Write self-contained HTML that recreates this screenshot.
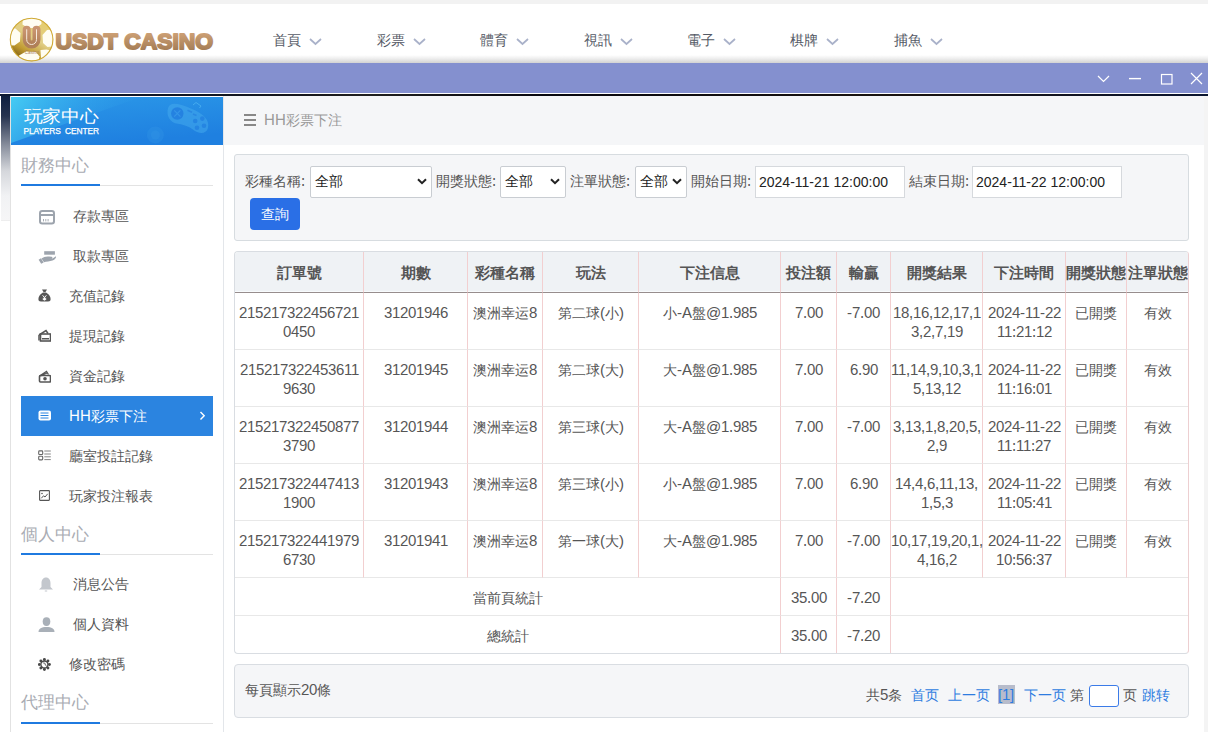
<!DOCTYPE html>
<html><head><meta charset="utf-8">
<style>
@font-face{font-family:"LSA";src:local("Liberation Sans");size-adjust:103.6%}
*{box-sizing:border-box;margin:0;padding:0}
html,body{width:1208px;height:732px;overflow:hidden;background:#fff;font-family:"LSA","Liberation Sans",sans-serif;color:#333}
.abs{position:absolute}
#topstrip{left:0;top:0;width:1208px;height:4px;background:#f2f2f2}
#header{left:0;top:4px;width:1208px;height:59px;background:#fff}
.nav{position:absolute;top:32px;font-size:14px;color:#555a66;white-space:nowrap}
.nav .chev{position:absolute;left:36px;top:5.5px}
#shadow{left:0;top:55px;width:1208px;height:8px;background:linear-gradient(#fff,#f0f0f0 40%,#d2d2d2)}
#band{left:0;top:63px;width:1208px;height:30px;background:#8490cf}
#wline{left:0;top:93px;width:1208px;height:1px;background:#fff}
#dline{left:0;top:94px;width:1208px;height:2px;background:linear-gradient(90deg,#0d1a33,#15161c 25%,#202020 30%,#08080f 45%,#1a1410 75%,#0a1530)}
#leftgrad{left:1px;top:96px;width:9px;height:125px;background:linear-gradient(#0e1f3f,#26334f 16%,#8a909e 40%,#d5d7dc 60%,#f1f2f4 80%,#f6f6f7 99%,#e8e8e8 100%)}
#sidebar{left:10px;top:96px;width:213px;height:640px;background:#fff;border-left:1px solid #e2e2e2}
#sbhead{left:11px;top:97px;width:212px;height:48px;background:#2489e2}
.sect{position:absolute;left:21px;font-size:17px;color:#a9acb3}
.sectline{position:absolute;left:21px;width:192px;height:1px;background:#e3e3e3}
.sectline b{position:absolute;left:0;top:-1px;width:79px;height:2px;background:#1f7ae0}
.item{position:absolute;left:21px;width:192px;height:40px;font-size:14px;color:#555}
.item span{position:absolute;top:12px}
.item.active{background:#2b84e0;color:#fff}
#main{left:223px;top:96px;width:985px;height:640px;background:#fff;border-left:1px solid #e3e6ea}
#crumb{left:224px;top:96px;width:980px;height:49px;background:#f5f6f8}
#rstrip{left:1204px;top:96px;width:4px;height:640px;background:#f4f4f4}
#filter{left:234px;top:154px;width:955px;height:87px;background:#f5f6f8;border:1px solid #d7dce0;border-radius:3px}
.lbl{position:absolute;top:173px;font-size:14px;color:#555}
.sel{position:absolute;top:166px;height:32px;background:#fff;border:1px solid #c9cdd2;border-radius:2px;font-size:14px;color:#222}
.sel span{position:absolute;left:4px;top:6px}
.sel svg{position:absolute;top:11px}
.inp{position:absolute;top:166px;height:32px;background:#fff;border:1px solid #d6d9dd;font-size:14px;color:#222;font-family:"Liberation Sans",sans-serif}
.inp span{position:absolute;left:3px;top:7px}
#btn{left:250px;top:198px;width:50px;height:32px;background:#2a6fe6;border-radius:4px;color:#fff;font-size:14px;text-align:center;line-height:32px}
table{position:absolute;left:234px;top:251px;border-collapse:separate;border-spacing:0;table-layout:fixed;font-size:14px;color:#555}

#tbl{left:234px;top:251px;width:955px;height:403px;border:1px solid #d9dde2;border-right-color:#edcfd1;border-radius:4px;overflow:hidden;background:#fff}
#tbl table{position:static;border-collapse:separate;border-spacing:0;table-layout:fixed;width:953px;font-size:14px;color:#555}
#tbl th,#tbl td{border-right:1px solid #f2cfd0;border-bottom:1px solid #e8e8e8;text-align:center;padding:0;white-space:nowrap}
#tbl th:last-child,#tbl td:last-child{border-right:none}
#tbl tr.hd th{height:41px;padding-top:3px;background:#eff2f5;border-bottom:1px solid #978d8d;box-shadow:inset 0 -1px #f8fbfd;font-size:15px;font-weight:bold;color:#555}
#tbl tr.bd td{height:57px;vertical-align:top;padding-top:11px;line-height:18.5px}
#tbl tr.sm td{height:38px;line-height:18px;padding-top:2px}
#tbl tr.sm2 td{height:37px;border-bottom:none}
#pager{left:234px;top:664px;width:955px;height:54px;background:#f5f6f8;border:1px solid #d9dde2;border-radius:4px}
.pg{top:687px;font-size:14px}
.blue{color:#2d7ce0}
</style></head><body>
<div id="topstrip" class="abs"></div>
<div id="header" class="abs"></div>
<div id="shadow" class="abs"></div>
<svg class="abs" style="left:0;top:0" width="230" height="63" viewBox="0 0 230 63">
  <defs>
   <linearGradient id="gold" x1=".8" y1="0" x2=".2" y2="1"><stop offset="0" stop-color="#e6cc68"/><stop offset=".45" stop-color="#e2cf86"/><stop offset=".75" stop-color="#c09a30"/><stop offset="1" stop-color="#6e5010"/></linearGradient>
   <linearGradient id="bronze" x1="0" y1="0" x2="0" y2="1"><stop offset="0" stop-color="#d6a87c"/><stop offset="1" stop-color="#9c7650"/></linearGradient>
   <linearGradient id="ubr" x1="0" y1="0" x2="0" y2="1"><stop offset="0" stop-color="#c99470"/><stop offset="1" stop-color="#b08058"/></linearGradient>
   <clipPath id="ball"><circle cx="31.6" cy="39.6" r="21.6"/></clipPath>
  </defs>
  <circle cx="31.6" cy="39.6" r="21.6" fill="url(#gold)"/>
  <g clip-path="url(#ball)" fill="#fffdf2">
   <path d="M23 16 L41 16 L41.5 24 L36 28 L28 28 L22.5 24.5Z"/>
   <path d="M7 28 L15.5 28.5 L20.5 33 L20 41.5 L14.5 45.5 L7 45Z"/>
   <path d="M56 29 L47 30 L42.5 35 L43 43 L47.5 47 L56 46Z"/>
   <path d="M19 55.5 L26 51.5 L36 52 L39.5 56.5 L38 64 L18 64Z"/>
   <path d="M40.5 50 L46.5 49.5 L52 51 L46.5 59.5 L41 58Z"/>
  </g>
  <circle cx="31.6" cy="39.6" r="21.3" fill="none" stroke="#cfa935" stroke-width="1.1"/>
  <path d="M26.7 29.7 V39.6 A4.9 4.9 0 0 0 36.5 39.6 V29.7" fill="none" stroke="url(#ubr)" stroke-width="8" stroke-linecap="round"/>
  <path d="M26.7 29.7 V39.6 A4.9 4.9 0 0 0 36.5 39.6 V29.7" fill="none" stroke="#f6eadc" stroke-width="1" stroke-linecap="round"/>
  <text x="31.8" y="53.6" font-family="Liberation Sans" font-size="4.6" fill="#a88060" text-anchor="middle" font-style="italic">Casino</text>
  <text x="55.6" y="48.9" font-family="Liberation Sans" font-weight="bold" font-size="22.2" fill="url(#bronze)" stroke="url(#bronze)" stroke-width="1.9" stroke-linejoin="round" textLength="157.5" lengthAdjust="spacingAndGlyphs">USDT CASINO</text>
</svg>
<div class="nav" style="left:273px">首頁<svg class="chev" width="13" height="8" viewBox="0 0 13 8"><path d="M1 1 L6.5 6 L12 1" stroke="#a9b1c9" stroke-width="1.7" fill="none"/></svg></div>
<div class="nav" style="left:377px">彩票<svg class="chev" width="13" height="8" viewBox="0 0 13 8"><path d="M1 1 L6.5 6 L12 1" stroke="#a9b1c9" stroke-width="1.7" fill="none"/></svg></div>
<div class="nav" style="left:480px">體育<svg class="chev" width="13" height="8" viewBox="0 0 13 8"><path d="M1 1 L6.5 6 L12 1" stroke="#a9b1c9" stroke-width="1.7" fill="none"/></svg></div>
<div class="nav" style="left:584px">視訊<svg class="chev" width="13" height="8" viewBox="0 0 13 8"><path d="M1 1 L6.5 6 L12 1" stroke="#a9b1c9" stroke-width="1.7" fill="none"/></svg></div>
<div class="nav" style="left:687px">電子<svg class="chev" width="13" height="8" viewBox="0 0 13 8"><path d="M1 1 L6.5 6 L12 1" stroke="#a9b1c9" stroke-width="1.7" fill="none"/></svg></div>
<div class="nav" style="left:790px">棋牌<svg class="chev" width="13" height="8" viewBox="0 0 13 8"><path d="M1 1 L6.5 6 L12 1" stroke="#a9b1c9" stroke-width="1.7" fill="none"/></svg></div>
<div class="nav" style="left:894px">捕魚<svg class="chev" width="13" height="8" viewBox="0 0 13 8"><path d="M1 1 L6.5 6 L12 1" stroke="#a9b1c9" stroke-width="1.7" fill="none"/></svg></div>

<div id="band" class="abs"></div>
<svg class="abs" style="left:1090px;top:65px" width="118" height="27" viewBox="0 0 118 27"><g stroke="#fff" fill="none" stroke-width="1.2"><path d="M8 11 L13.5 16.5 L19 11"/><path d="M39 13.6 H51" stroke-width="1.4"/><rect x="71.5" y="9.5" width="10.5" height="9.5"/><path d="M101 8 L112 19 M112 8 L101 19"/></g></svg>
<div id="wline" class="abs"></div>
<div id="dline" class="abs"></div>
<div id="leftgrad" class="abs"></div>
<div id="sidebar" class="abs"></div>
<div id="sbhead" class="abs"></div>
<div id="main" class="abs"></div>
<div id="crumb" class="abs"></div>
<div id="rstrip" class="abs"></div>
<div id="filter" class="abs"></div>

<svg class="abs" style="left:11px;top:97px" width="212" height="48" viewBox="0 0 212 48">
 <defs><linearGradient id="sbg" x1="0" y1="0" x2="0.35" y2="1"><stop offset="0" stop-color="#2b98e8"/><stop offset="1" stop-color="#1f80e0"/></linearGradient>
 <linearGradient id="sbl" x1="0" y1="0" x2="1" y2="0.3"><stop offset="0" stop-color="#45ccf3"/><stop offset="0.6" stop-color="#34a8ec" stop-opacity=".45"/><stop offset="1" stop-color="#2d9ae8" stop-opacity="0"/></linearGradient></defs>
 <rect width="212" height="48" fill="url(#sbg)"/>
 <path d="M0 0 H130 L0 46Z" fill="url(#sbl)"/>
 <g transform="translate(177,21) rotate(17)"><path d="M-22 -4 C-22 -11 -12 -11 0 -10 C12 -9 22 -5 22 4 C22 11 14 12 8 9.5 C3 7.5 -3 8 -8 8.5 C-16 10 -22 4 -22 -4Z" fill="#46acee" opacity=".5"/></g>
 <circle cx="166.3" cy="16.5" r="6.2" fill="#2280e0" opacity=".9"/>
 <path d="M163.2 13.4 L169.4 19.6 M169.4 13.4 L163.2 19.6" stroke="#3595e8" stroke-width="1.2"/>
 <path d="M176.5 13.2 l4.5 2 M182 17 l3.5 1.6" stroke="#2a88e2" stroke-width="1.6"/>
 <g fill="#2585e2"><circle cx="191.3" cy="21.6" r="2.3"/><circle cx="184.2" cy="24" r="2.3"/><circle cx="193" cy="28.8" r="2.3"/><circle cx="186" cy="30.8" r="2.3"/></g>
 <path d="M182 8 l3 -2.5 l5 3.5 l-1.5 2" stroke="#4cb2f0" stroke-width="1" fill="none" opacity=".8"/>
 <circle cx="144.4" cy="38" r="8.5" fill="#3aa0ea" opacity=".22"/><circle cx="144.4" cy="38" r="4.5" fill="#3aa0ea" opacity=".2"/>
 <text transform="translate(12.5 24.6) scale(1 0.9)" font-size="19" fill="#fff">玩家中心</text>
 <text x="12.5" y="37" font-size="8.4" fill="#fff" stroke="#fff" stroke-width=".25" font-family="Liberation Sans" textLength="75.5" lengthAdjust="spacing" style="white-space:pre">PLAYERS  CENTER</text>
</svg>
<div class="sect" style="top:154px">財務中心</div>
<div class="sectline" style="top:185px"><b></b></div>
<div class="item" style="top:196px"><svg class="abs" style="left:17px;top:13px" width="18" height="16" viewBox="0 0 18 16"><rect x="2" y="2" width="14" height="12.5" rx="2.2" fill="none" stroke="#9da4ad" stroke-width="2"/><rect x="2" y="5" width="14" height="2" fill="#9da4ad"/><path d="M5.5 10v2.4M7.8 10v2.4M10.1 10v2.4" stroke="#9da4ad" stroke-width=".9"/></svg><span style="left:52px">存款專區</span></div>
<div class="item" style="top:236px"><svg class="abs" style="left:17px;top:15px" width="19" height="13" viewBox="0 0 19 13"><rect x="6.2" y="0.2" width="10.7" height="3.5" fill="#9da4ad"/><path d="M3.5 7.5 C5.5 6 8 5.2 11 5.5 L13.5 5.7 C14.8 5.8 14.8 7.3 13.5 7.4 L9.5 7.8 L14.5 7.6 L18 5.2 C18.6 6.2 17 8.5 14.5 9.6 C12 10.6 8 10.8 6 11.2Z" fill="#9da4ad"/><path d="M0.6 8.8 L3 7.2 L5.6 11.4 L3.2 12.8Z" fill="#9da4ad"/></svg><span style="left:52px">取款專區</span></div>
<div class="item" style="top:276px"><svg class="abs" style="left:17px;top:13px" width="13" height="13" viewBox="0 0 13 13"><path d="M4 0.5h5l-1.5 2.5h-2z" fill="#555"/><path d="M5 3.5h3C11 5 13 8 12.5 11 12 12.5 11 12.5 6.5 12.5 2 12.5 1 12.5 0.5 11 0 8 2 5 5 3.5z" fill="#555"/><path d="M4.6 6.3l1.9 2.2 1.9-2.2M6.5 8.5v3M4.8 9.3h3.4M4.8 10.6h3.4" stroke="#fff" stroke-width="1" fill="none"/></svg><span style="left:48px">充值記錄</span></div>
<div class="item" style="top:316px"><svg class="abs" style="left:17px;top:13px" width="13" height="13" viewBox="0 0 13 13"><path d="M1 6 L8 1.5 L10 4.5" stroke="#555" stroke-width="1.5" fill="none"/><rect x="2.5" y="5" width="10" height="7" fill="none" stroke="#555" stroke-width="1.6"/><path d="M1 6v5.5" stroke="#555" stroke-width="1.5"/><rect x="4" y="9" width="7" height="1.5" fill="#555"/></svg><span style="left:48px">提現記錄</span></div>
<div class="item" style="top:356px"><svg class="abs" style="left:17px;top:14px" width="13" height="13" viewBox="0 0 13 13"><path d="M1.5 6 L8.5 1.5 L10.5 4.5 M2.5 6 L9 3" stroke="#555" stroke-width="1.3" fill="none"/><rect x="1.5" y="5.5" width="11" height="6.5" rx="1" fill="none" stroke="#555" stroke-width="1.6"/><circle cx="7" cy="8.7" r="1.8" fill="#555"/></svg><span style="left:48px">資金記錄</span></div>
<div class="item active" style="top:396px"><svg class="abs" style="left:17px;top:14px" width="13" height="11" viewBox="0 0 13 11"><rect x="0.5" y="0.5" width="12.5" height="10" rx="2" fill="#fff"/><path d="M2.5 3h8M2.5 5.5h8M2.5 8h8" stroke="#2b84e0" stroke-width="1"/></svg><span style="left:48px">HH彩票下注</span><svg class="abs" style="left:178px;top:15px" width="7" height="10" viewBox="0 0 7 10"><path d="M1.5 1 L5.2 4.8 L1.5 8.6" stroke="#fff" stroke-width="1.4" fill="none"/></svg></div>
<div class="item" style="top:436px"><svg class="abs" style="left:17px;top:14px" width="13" height="11" viewBox="0 0 13 11"><rect x="0.7" y="0.9" width="4" height="3.6" rx=".8" fill="none" stroke="#666" stroke-width="1.1"/><rect x="0.7" y="6.3" width="4" height="3.6" rx=".8" fill="none" stroke="#666" stroke-width="1.1"/><path d="M6.3 1h6.5M6.3 4h6.5M6.3 6.8h6.5M6.3 9.6h6.5" stroke="#777" stroke-width=".9"/></svg><span style="left:48px">廳室投註記錄</span></div>
<div class="item" style="top:476px"><svg class="abs" style="left:18px;top:14px" width="11" height="11" viewBox="0 0 11 11"><rect x="0.6" y="0.6" width="9.8" height="9.8" rx=".6" fill="none" stroke="#555" stroke-width="1.1"/><path d="M2.3 8.3 L4.5 5.8 L6 7 L8.7 3.8" stroke="#555" stroke-width="1" fill="none"/><circle cx="3" cy="3.5" r=".8" fill="#555"/></svg><span style="left:48px">玩家投注報表</span></div>
<div class="sect" style="top:523px">個人中心</div>
<div class="sectline" style="top:554px"><b></b></div>
<div class="item" style="top:564px"><svg class="abs" style="left:17px;top:13px" width="16" height="15" viewBox="0 0 16 15"><path d="M8 0.5C5 0.5 3.5 3 3.5 6 L3.5 10 L1 12.5 L15 12.5 L12.5 10 L12.5 6 C12.5 3 11 0.5 8 0.5Z" fill="#c3c7cd"/><path d="M6.8 14h2.4" stroke="#c3c7cd" stroke-width="1"/></svg><span style="left:52px">消息公告</span></div>
<div class="item" style="top:604px"><svg class="abs" style="left:17px;top:13px" width="17" height="15" viewBox="0 0 17 15"><ellipse cx="8.5" cy="4.6" rx="3.8" ry="4.4" fill="#a9b0b8"/><path d="M0.5 15 C0.5 11.5 3.5 10 8.5 10 C13.5 10 16.5 11.5 16.5 15Z" fill="#a9b0b8"/></svg><span style="left:52px">個人資料</span></div>
<div class="item" style="top:644px"><svg class="abs" style="left:17px;top:14px" width="13" height="13" viewBox="0 0 13 13"><g fill="#4a4a4a"><circle cx="11.40" cy="6.50" r="1.45"/><circle cx="9.94" cy="10.04" r="1.45"/><circle cx="6.40" cy="11.50" r="1.45"/><circle cx="2.86" cy="10.04" r="1.45"/><circle cx="1.40" cy="6.50" r="1.45"/><circle cx="2.86" cy="2.96" r="1.45"/><circle cx="6.40" cy="1.50" r="1.45"/><circle cx="9.94" cy="2.96" r="1.45"/></g><circle cx="6.4" cy="6.5" r="3.5" fill="none" stroke="#4a4a4a" stroke-width="1.3"/><path d="M5.2 5 C6.5 4.6 7.6 5.6 7.2 6.8 L8.8 8.4" stroke="#555" stroke-width="1" fill="none"/></svg><span style="left:48px">修改密碼</span></div>
<div class="sect" style="top:691px">代理中心</div>
<div class="sectline" style="top:723px"><b></b></div>

<div class="abs" style="left:244px;top:114px;width:12px;height:2px;background:#888"></div>
<div class="abs" style="left:244px;top:119px;width:12px;height:2px;background:#888"></div>
<div class="abs" style="left:244px;top:124px;width:12px;height:2px;background:#888"></div>
<div class="abs" style="left:264px;top:112px;font-size:14px;color:#999">HH彩票下注</div>
<div class="lbl" style="left:245px">彩種名稱:</div>
<div class="sel" style="left:310px;width:122px"><span>全部</span><svg style="left:106px" width="10" height="7" viewBox="0 0 10 7"><path d="M1 1.2 L5 5.2 L9 1.2" stroke="#222" stroke-width="2" fill="none"/></svg></div>
<div class="lbl" style="left:436px">開獎狀態:</div>
<div class="sel" style="left:500px;width:66px"><span>全部</span><svg style="left:49px" width="10" height="7" viewBox="0 0 10 7"><path d="M1 1.2 L5 5.2 L9 1.2" stroke="#222" stroke-width="2" fill="none"/></svg></div>
<div class="lbl" style="left:570px">注單狀態:</div>
<div class="sel" style="left:635px;width:52px"><span>全部</span><svg style="left:36px" width="10" height="7" viewBox="0 0 10 7"><path d="M1 1.2 L5 5.2 L9 1.2" stroke="#222" stroke-width="2" fill="none"/></svg></div>
<div class="lbl" style="left:691px">開始日期:</div>
<div class="inp" style="left:755px;width:150px"><span>2024-11-21 12:00:00</span></div>
<div class="lbl" style="left:909px">結束日期:</div>
<div class="inp" style="left:972px;width:150px"><span>2024-11-22 12:00:00</span></div>
<div id="btn" class="abs">查詢</div>
<div id="tbl" class="abs"><table><colgroup><col style="width:129px"><col style="width:104px"><col style="width:75px"><col style="width:96px"><col style="width:142px"><col style="width:56px"><col style="width:54px"><col style="width:92px"><col style="width:83px"><col style="width:61px"><col style="width:61px"></colgroup><tr class="hd"><th>訂單號</th><th>期數</th><th>彩種名稱</th><th>玩法</th><th>下注信息</th><th>投注額</th><th>輸贏</th><th>開獎結果</th><th>下注時間</th><th>開獎狀態</th><th>注單狀態</th></tr><tr class="bd"><td>215217322456721<br>0450</td><td>31201946</td><td>澳洲幸运8</td><td>第二球(小)</td><td>小-A盤@1.985</td><td>7.00</td><td>-7.00</td><td>18,16,12,17,1<br>3,2,7,19</td><td>2024-11-22<br>11:21:12</td><td>已開獎</td><td>有效</td></tr><tr class="bd"><td>215217322453611<br>9630</td><td>31201945</td><td>澳洲幸运8</td><td>第二球(大)</td><td>大-A盤@1.985</td><td>7.00</td><td>6.90</td><td>11,14,9,10,3,1<br>5,13,12</td><td>2024-11-22<br>11:16:01</td><td>已開獎</td><td>有效</td></tr><tr class="bd"><td>215217322450877<br>3790</td><td>31201944</td><td>澳洲幸运8</td><td>第三球(大)</td><td>大-A盤@1.985</td><td>7.00</td><td>-7.00</td><td>3,13,1,8,20,5,<br>2,9</td><td>2024-11-22<br>11:11:27</td><td>已開獎</td><td>有效</td></tr><tr class="bd"><td>215217322447413<br>1900</td><td>31201943</td><td>澳洲幸运8</td><td>第三球(小)</td><td>小-A盤@1.985</td><td>7.00</td><td>6.90</td><td>14,4,6,11,13,<br>1,5,3</td><td>2024-11-22<br>11:05:41</td><td>已開獎</td><td>有效</td></tr><tr class="bd"><td>215217322441979<br>6730</td><td>31201941</td><td>澳洲幸运8</td><td>第一球(大)</td><td>大-A盤@1.985</td><td>7.00</td><td>-7.00</td><td>10,17,19,20,1,<br>4,16,2</td><td>2024-11-22<br>10:56:37</td><td>已開獎</td><td>有效</td></tr><tr class="sm"><td colspan="5">當前頁統計</td><td>35.00</td><td>-7.20</td><td colspan="4" class="last"></td></tr><tr class="sm sm2"><td colspan="5">總統計</td><td>35.00</td><td>-7.20</td><td colspan="4" class="last"></td></tr></table></div>
<div id="pager" class="abs"></div>
<div class="abs" style="left:245px;top:682px;font-size:14px;color:#555">每頁顯示20條</div>
<div class="abs pg" style="left:866px;color:#555">共5条</div>
<div class="abs pg blue" style="left:911px">首页</div>
<div class="abs pg blue" style="left:948px">上一页</div>
<div class="abs" style="left:998px;top:685px;width:17px;height:19px;background:#b7bccb"></div>
<div class="abs pg blue" style="left:998px">[1]</div>
<div class="abs pg blue" style="left:1024px">下一页</div>
<div class="abs pg" style="left:1070px;color:#555">第</div>
<div class="abs" style="left:1089px;top:685px;width:30px;height:22px;border:1.5px solid #3b7be8;border-radius:3px;background:#fff"></div>
<div class="abs pg" style="left:1123px;color:#555">页</div>
<div class="abs pg blue" style="left:1142px">跳转</div>
</body></html>
